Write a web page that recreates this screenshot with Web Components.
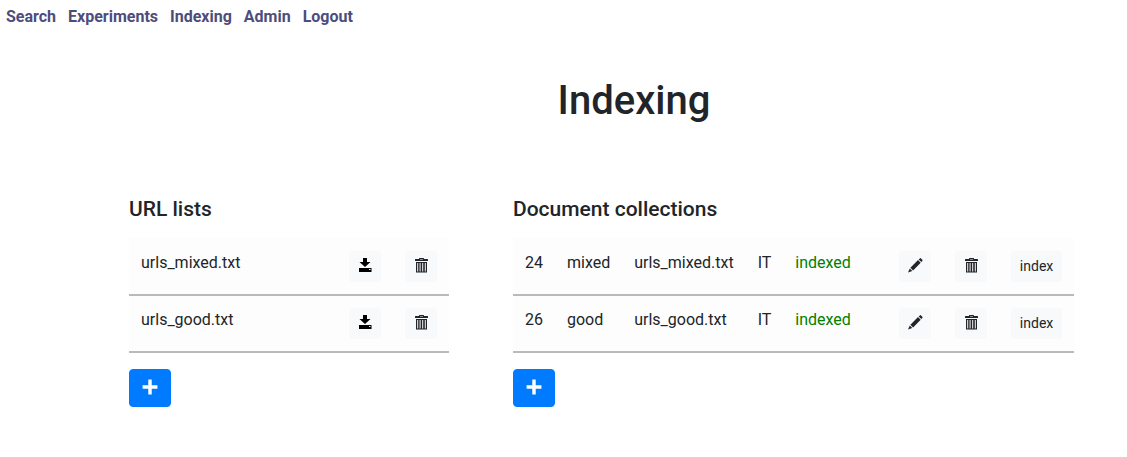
<!DOCTYPE html>
<html lang="en">
<head>
<meta charset="utf-8">
<title>Indexing</title>
<style>
body { margin: 0; background: #fff; color: #212529; font: 16px/24px Roboto, "Liberation Sans", sans-serif; }
</style>
</head>
<body>
<indexing-page></indexing-page>
<script>
const ICONS = {
  download: '<path d="M5 0h4v4h3.500L7 9 1.500 4H5z"/><path fill-rule="evenodd" d="M1 10h12.500v4H1V10zM11 11v1h1.500v-1z"/>',
  trash: '<path fill-rule="evenodd" d="M5 1V.5Q5 0 5.500 0h4q.5 0 .5.5V1h3.500q.5 0 .5.5V3H1V1.500Q1 1 1.500 1zM6 1v.5h3V1z"/><path fill-rule="evenodd" d="M2 4h11v10.500H2zM3.200 5v8.500h1V5zM5.600 5v8.500h1V5zM8.200 5v8.500h1V5zM10.800 5v8.500h1V5z"/>',
  pencil: '<path d="M11.800.4q.6-.6 1.200 0l1.300 1.300q.6.600 0 1.200l-1 1L10.700 1.500zM10 2.100l2.700 2.700-7.600 7.600-2.700-2.700zM1.800 10.400l2.500 2.500L0 14.400z"/>',
  plus: '<path d="M5.500.5h3v5h5v3h-5v5h-3v-5h-5v-3h5z"/>'
};

class AppNav extends HTMLElement {
  constructor() {
    super();
    this.attachShadow({ mode: 'open' }).innerHTML = `
      <style>
        :host { display: block; }
        nav { display: flex; flex-wrap: wrap; gap: 12px; padding: 5px 6px; }
        ::slotted(a) { color: #4d4d7c; font-weight: 700; text-decoration: none; }
      </style>
      <nav aria-label="Main"><slot></slot></nav>`;
  }
}
customElements.define('app-nav', AppNav);

class IconButton extends HTMLElement {
  constructor() {
    super();
    const icon = this.getAttribute('icon');
    const label = this.getAttribute('label');
    this.attachShadow({ mode: 'open' }).innerHTML = `
      <style>
        :host { display: block; width: max-content; }
        button {
          display: block; margin: 0; padding: 4px 8px; border: 1px solid #f8f9fa; border-radius: 3px;
          background: #f8f9fa; color: #212529; font: inherit; font-size: 14px; line-height: 21px; cursor: pointer;
        }
        svg { display: block; width: 14px; height: 14px; margin: 2px 0 5px; overflow: visible; fill: currentColor; }
        :host([icon="download"]) button { color: #000; }
        :host([icon="plus"]) button { padding: 6px 12px; border-color: #007bff; border-radius: 4px; background: #007bff; color: #fff; }
        :host([icon="plus"]) svg { width: 16px; height: 16px; margin: 3px 0 5px; }
      </style>
      <button type="button"${label ? ` aria-label="${label}"` : ''}>${
        icon ? `<svg viewBox="0 0 14 14" aria-hidden="true">${ICONS[icon]}</svg>` : '<slot></slot>'
      }</button>`;
  }
}
customElements.define('icon-button', IconButton);

class ListPanel extends HTMLElement {
  constructor() {
    super();
    this.attachShadow({ mode: 'open' }).innerHTML = `
      <style>
        :host { display: block; }
        h2 { margin: 0; font-size: 21px; line-height: 26px; font-weight: 500; }
        .content { padding: 16px 0; }
      </style>
      <section>
        <h2><slot name="title"></slot></h2>
        <div class="content"><slot></slot></div>
        <slot name="action"></slot>
      </section>`;
  }
}
customElements.define('list-panel', ListPanel);

const TABLE_STYLE = `
  :host { display: block; }
  table { width: 100%; border-spacing: 0; border-top: 1px solid #fdfdfd; background: #fdfdfd; }
  td { padding: 12px; border-bottom: 2px solid #bababa; vertical-align: top; text-align: left; white-space: nowrap; }
  .action { width: 1px; }
  .status { color: green; }`;

class UrlTable extends HTMLElement {
  constructor() {
    super();
    const rows = ['urls_mixed.txt', 'urls_good.txt'].map(file => `
      <tr>
        <td>${file}</td>
        <td class="action"><icon-button icon="download" label="Download ${file}"></icon-button></td>
        <td class="action"><icon-button icon="trash" label="Delete ${file}"></icon-button></td>
      </tr>`).join('');
    this.attachShadow({ mode: 'open' }).innerHTML =
      `<style>${TABLE_STYLE}</style><table aria-label="URL lists"><tbody>${rows}</tbody></table>`;
  }
}
customElements.define('url-table', UrlTable);

class CollectionTable extends HTMLElement {
  constructor() {
    super();
    const data = [[24, 'mixed', 'urls_mixed.txt', 'IT', 'indexed'], [26, 'good', 'urls_good.txt', 'IT', 'indexed']];
    const rows = data.map(([id, name, file, lang, status]) => `
      <tr>
        <td>${id}</td><td>${name}</td><td>${file}</td><td>${lang}</td>
        <td class="status">${status}</td><td></td>
        <td class="action"><icon-button icon="pencil" label="Edit ${name}"></icon-button></td>
        <td class="action"><icon-button icon="trash" label="Delete ${name}"></icon-button></td>
        <td class="action"><icon-button>index</icon-button></td>
      </tr>`).join('');
    this.attachShadow({ mode: 'open' }).innerHTML =
      `<style>${TABLE_STYLE} table { width: auto; }</style><table aria-label="Document collections"><tbody>${rows}</tbody></table>`;
  }
}
customElements.define('collection-table', CollectionTable);

class IndexingPage extends HTMLElement {
  constructor() {
    super();
    this.attachShadow({ mode: 'open' }).innerHTML = `
      <style>
        :host { display: block; }
        main { padding: 43px 0 48px 129px; }
        h1 { margin: 0 0 71px; padding-left: 12px; font-size: 40px; line-height: 48px; font-weight: 500; text-align: center; }
        .panels { display: grid; grid-template-columns: minmax(auto, 320px) auto; justify-content: start; gap: 64px; }
      </style>
      <app-nav>
        <a href="#search">Search</a>
        <a href="#experiments">Experiments</a>
        <a href="#indexing">Indexing</a>
        <a href="#admin">Admin</a>
        <a href="#logout">Logout</a>
      </app-nav>
      <main>
        <h1>Indexing</h1>
        <div class="panels">
          <list-panel>
            <span slot="title">URL lists</span>
            <url-table></url-table>
            <icon-button slot="action" icon="plus" label="Add URL list"></icon-button>
          </list-panel>
          <list-panel>
            <span slot="title">Document collections</span>
            <collection-table></collection-table>
            <icon-button slot="action" icon="plus" label="Add document collection"></icon-button>
          </list-panel>
        </div>
      </main>`;
  }
}
customElements.define('indexing-page', IndexingPage);
</script>
</body>
</html>
